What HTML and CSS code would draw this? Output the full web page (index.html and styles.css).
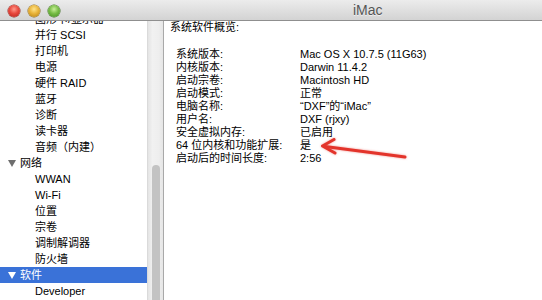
FILE: index.html
```html
<!DOCTYPE html>
<html lang="zh-CN">
<head>
<meta charset="utf-8">
<title>iMac</title>
<link rel="stylesheet" href="styles.css">
</head>
<body>
<div class="window">
  <div class="titlebar">
    <div class="lights">
      <span class="light red"></span>
      <span class="light yellow"></span>
      <span class="light green"></span>
    </div>
    <div class="title">iMac</div>
  </div>
  <div class="main">
    <div class="sidebar">
      <ul class="tree">
        <li class="item">图形卡/显示器</li>
        <li class="item">并行 SCSI</li>
        <li class="item">打印机</li>
        <li class="item">电源</li>
        <li class="item">硬件 RAID</li>
        <li class="item">蓝牙</li>
        <li class="item">诊断</li>
        <li class="item">读卡器</li>
        <li class="item">音频（内建）</li>
        <li class="group"><span class="tri"></span>网络</li>
        <li class="item">WWAN</li>
        <li class="item">Wi-Fi</li>
        <li class="item">位置</li>
        <li class="item">宗卷</li>
        <li class="item">调制解调器</li>
        <li class="item">防火墙</li>
        <li class="group selected"><span class="tri"></span>软件</li>
        <li class="item">Developer</li>
      </ul>
    </div>
    <div class="scrollbar"><div class="thumb"></div></div>
    <div class="content">
      <div class="heading">系统软件概览:</div>
      <dl class="info">
        <dt>系统版本:</dt><dd>Mac OS X 10.7.5 (11G63)</dd>
        <dt>内核版本:</dt><dd>Darwin 11.4.2</dd>
        <dt>启动宗卷:</dt><dd>Macintosh HD</dd>
        <dt>启动模式:</dt><dd>正常</dd>
        <dt>电脑名称:</dt><dd>“DXF”的“iMac”</dd>
        <dt>用户名:</dt><dd>DXF (rjxy)</dd>
        <dt>安全虚拟内存:</dt><dd>已启用</dd>
        <dt>64 位内核和功能扩展:</dt><dd>是</dd>
        <dt>启动后的时间长度:</dt><dd>2:56</dd>
      </dl>
    </div>
  </div>
  <svg class="arrow" width="542" height="300" viewBox="0 0 542 300" aria-hidden="true">
    <g fill="none" stroke="#e3342b" stroke-width="3" stroke-linecap="round" stroke-linejoin="round">
      <path d="M405 157 L325 146.5"/>
      <path d="M334 139.5 L322.5 146 L335 153"/>
    </g>
  </svg>
</div>
</body>
</html>
```

FILE: styles.css
```css
* { box-sizing: border-box; }
html, body {
  margin: 0;
  padding: 0;
  width: 542px;
  height: 300px;
  overflow: hidden;
  background: #ffffff;
}
body {
  font-family: "Liberation Sans", "Noto Sans CJK SC", sans-serif;
  font-size: 11px;
  color: #000;
}
.window {
  position: relative;
  width: 542px;
  height: 300px;
  display: flex;
  flex-direction: column;
  overflow: hidden;
}
.titlebar {
  height: 21px;
  flex: none;
  display: flex;
  align-items: center;
  background: linear-gradient(#ececec, #d3d3d3);
  border-bottom: 1px solid #8f8f8f;
  position: relative;
  z-index: 2;
}
.lights {
  display: flex;
  gap: 8px;
  padding-left: 8px;
  padding-top: 1px;
}
.light {
  width: 12px;
  height: 12px;
  border-radius: 50%;
  display: block;
}
.red {
  background: radial-gradient(circle at 50% 35%, #ff9a8c 0, #e8483d 45%, #b3211a 100%);
  box-shadow: 0 0 0 0.5px #8e2a24;
}
.yellow {
  background: radial-gradient(circle at 50% 35%, #ffe48a 0, #e9b43a 45%, #b27d12 100%);
  box-shadow: 0 0 0 0.5px #8d6a1e;
}
.green {
  background: radial-gradient(circle at 50% 35%, #c9f09a 0, #78bd46 45%, #3f8a1e 100%);
  box-shadow: 0 0 0 0.5px #3f6e22;
}
.title {
  margin-left: 293px;
  font-size: 14px;
  color: #555;
  text-shadow: 0 1px 0 rgba(255,255,255,0.6);
}
.main {
  height: 279px;
  flex: none;
  display: flex;
  overflow: hidden;
}
.sidebar {
  width: 147px;
  flex: none;
  overflow: hidden;
  background: #fff;
}
.tree {
  list-style: none;
  margin: -10px 0 0 0;
  padding: 0;
}
.tree li {
  height: 16px;
  line-height: 16px;
  white-space: nowrap;
}
.item {
  padding-left: 35px;
}
.group {
  display: flex;
  align-items: center;
  padding-left: 8px;
}
.tri {
  width: 0;
  height: 0;
  border-left: 4px solid transparent;
  border-right: 4px solid transparent;
  border-top: 7px solid #6e6e6e;
  margin-right: 4px;
}
.selected {
  background: #3a72d8;
  color: #fff;
}
.selected .tri {
  border-top-color: #fff;
}
.scrollbar {
  width: 17px;
  flex: none;
  background: linear-gradient(90deg, #e4e4e4, #f1f1f1 30%, #eeeeee 70%, #e6e6e6);
  border-left: 1px solid #dadada;
  border-right: 1px solid #a9a9a9;
  padding: 144px 0 0 4px;
  overflow: hidden;
}
.thumb {
  width: 8px;
  height: 140px;
  border-radius: 4px;
  background: #c3c3c3;
}
.content {
  flex: 1;
  padding: 0 0 0 6px;
  background: #fff;
}
.heading {
  line-height: 13px;
}
.info {
  margin: 14px 0 0 6px;
  display: grid;
  grid-template-columns: 124px auto;
  line-height: 13px;
}
.info dt, .info dd {
  margin: 0;
  white-space: nowrap;
}
.arrow {
  position: absolute;
  left: 0;
  top: 0;
  pointer-events: none;
  filter: drop-shadow(0 0 1px rgba(227,52,43,0.5));
}
```
